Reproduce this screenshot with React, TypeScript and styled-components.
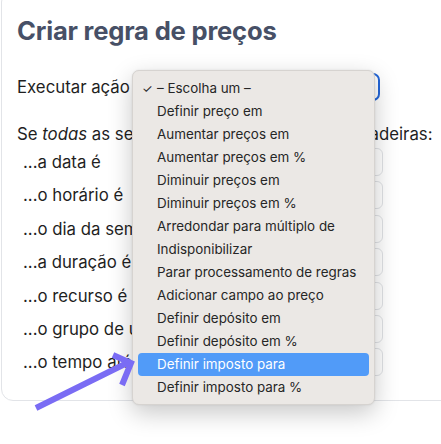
import React from "react"
import styled, { createGlobalStyle } from "styled-components"

const GlobalStyle = createGlobalStyle`
  html, body {
    margin: 0;
    padding: 0;
    background: #ffffff;
    overflow: hidden;
  }
  body {
    font-family: Inter, "Liberation Sans", sans-serif;
    color: #1f1f1f;
  }
`

const options = [
  "Definir preço em",
  "Aumentar preços em",
  "Aumentar preços em %",
  "Diminuir preços em",
  "Diminuir preços em %",
  "Arredondar para múltiplo de",
  "Indisponibilizar",
  "Parar processamento de regras",
  "Adicionar campo ao preço",
  "Definir depósito em",
  "Definir depósito em %",
  "Definir imposto para",
  "Definir imposto para %",
]

const conditions = [
  "...a data é",
  "...o horário é",
  "...o dia da semana é",
  "...a duração é",
  "...o recurso é",
  "...o grupo de usuários é",
  "...o tempo até",
]

const App: React.FunctionComponent = () => {
  return (
    <Page>
      <GlobalStyle />
      <Card>
        <Title>Criar regra de preços</Title>
        <ActionRow>
          <Label>Executar ação</Label>
          <Select />
        </ActionRow>
        <Intro>
          Se <em>todas</em> as seguintes condições forem verdadeiras:
        </Intro>
        <Conditions>
          {conditions.map((c) => (
            <ConditionRow key={c}>
              <ConditionLabel>{c}</ConditionLabel>
              <Field />
            </ConditionRow>
          ))}
        </Conditions>
      </Card>

      <Menu>
        <MenuItem>
          <Check>✓</Check>– Escolha um –
        </MenuItem>
        {options.map((o) => (
          <MenuItem key={o} active={o === "Definir imposto para"}>
            {o}
          </MenuItem>
        ))}
      </Menu>

      <Arrow width="441" height="444" viewBox="0 0 441 444">
        <path
          d="M36 408 L129 362 M113 355 L131 363 L122 385"
          fill="none"
          stroke="#7a6cf4"
          strokeWidth="6"
          strokeLinejoin="miter"
        />
      </Arrow>
    </Page>
  )
}

const Page = styled.div`
  position: relative;
  width: 441px;
  height: 444px;
  overflow: hidden;
`

const Card = styled.div`
  margin: -10px 0 0 1px;
  width: 520px;
  border: 1px solid #e2e4e8;
  border-radius: 12px;
  padding: 25px 0 24px 15px;
`

const Title = styled.h1`
  margin: 0;
  font-size: 25.6px;
  line-height: 30px;
  font-weight: 700;
  color: #475066;
  letter-spacing: -0.2px;
`

const ActionRow = styled.div`
  display: flex;
  align-items: center;
  margin-top: 27px;
  width: 363px;
`

const Label = styled.span`
  font-size: 16.8px;
  white-space: nowrap;
`

const Select = styled.div`
  margin-left: auto;
  width: 236px;
  height: 24px;
  border: 2px solid #2466d8;
  border-radius: 7px;
`

const Intro = styled.p`
  margin: 22px 0 0;
  font-size: 16.8px;
  line-height: 22px;
  white-space: nowrap;
`

const Conditions = styled.div`
  display: flex;
  flex-direction: column;
  gap: 5.4px;
  margin: 3px 0 0 6px;
  width: 360px;
`

const ConditionRow = styled.div`
  display: flex;
  align-items: center;
  height: 28px;
`

const ConditionLabel = styled.span`
  font-size: 16.8px;
  white-space: nowrap;
`

const Field = styled.div`
  margin-left: auto;
  width: 220px;
  height: 26px;
  border: 1px solid #e1e3e6;
  border-radius: 6px;
  background: #fff;
`

const Menu = styled.div`
  position: absolute;
  left: 132px;
  top: 70px;
  width: 243px;
  box-sizing: border-box;
  padding: 6px 5px 5px;
  background: #ebe8e5;
  border: 1px solid #d6d3d0;
  border-radius: 7px;
  box-shadow: 0 8px 24px rgba(0, 0, 0, 0.22), 0 0 2px rgba(0, 0, 0, 0.1);
`

const MenuItem = styled.div<{ active?: boolean }>`
  position: relative;
  height: 23px;
  line-height: 23px;
  padding-left: 19px;
  border-radius: 4px;
  font-size: 13.4px;
  color: ${(p) => (p.active ? "#ffffff" : "#262626")};
  background: ${(p) => (p.active ? "#519bf8" : "transparent")};
  white-space: nowrap;
`

const Check = styled.span`
  position: absolute;
  left: 4px;
  font-size: 12px;
`

const Arrow = styled.svg`
  position: absolute;
  left: 0;
  top: 0;
  pointer-events: none;
`

export default App
